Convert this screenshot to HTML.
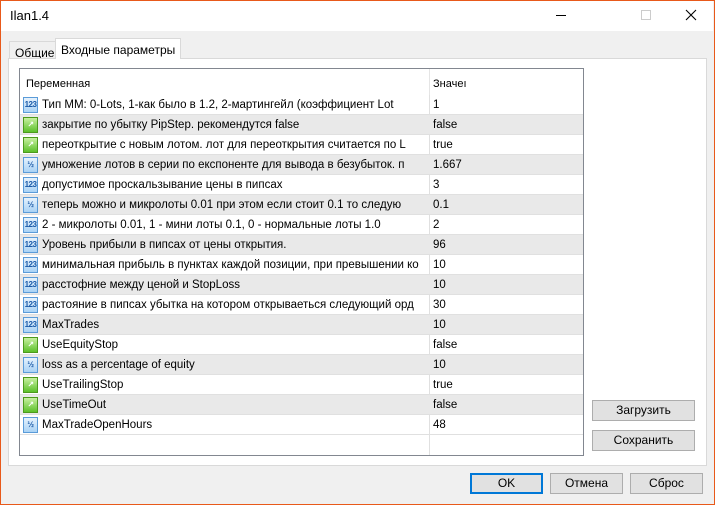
<!DOCTYPE html>
<html><head><meta charset="utf-8"><style>
*{margin:0;padding:0;box-sizing:border-box}
body{width:715px;height:505px;position:relative;background:#f0f0f0;font-family:"Liberation Sans","DejaVu Sans",sans-serif;font-size:12px;color:#000;overflow:hidden}
.win{position:absolute;left:0;top:0;width:715px;height:505px;border:1px solid #e8591a;border-top-color:#e8591a}
.title{position:absolute;left:1px;top:1px;width:712px;height:30px;background:#fff}
.title span{position:absolute;left:9px;top:7px;font-size:13px}
.tab{position:absolute;top:39px;height:20px;border:1px solid #d9d9d9;border-bottom:none;background:#f0f0f0;padding:4px 5px 0;font-size:12px}
.panel{position:absolute;left:8px;top:58px;width:699px;height:408px;background:#fff;border:1px solid #d9d9d9}
.list{position:absolute;left:19px;top:68px;width:565px;height:388px;border:1px solid #828790;background:#fff}
.hdr{position:absolute;left:0;top:0;height:26px;width:563px}
.hdr div{position:absolute;top:9px;font-size:11px}
.row{position:absolute;left:0;width:563px;height:20px;border-bottom:1px solid #e0e0e0;font-size:11.5px}
.row.g{background:#e9e9e9}
.row .n{position:absolute;left:22px;top:4px;white-space:nowrap;width:386px;overflow:hidden}
.row .v{position:absolute;left:413px;top:4px}
.sep{position:absolute;left:409px;top:0;width:1px;height:365px;background:#e0e0e0}
.ic{position:absolute;left:3px;top:2px;width:15px;height:16px;border:1px solid #5a9bd8;background:linear-gradient(#e6f2fd,#a9d2f5);font-size:8px;color:#1a5aa8;font-weight:bold;text-align:center;line-height:14px;letter-spacing:-0.5px}
.ic.gr{border-color:#4c9a1c;background:linear-gradient(#c8f0a0,#5cc02a);color:#fff}
.btn{position:absolute;height:21px;border:1px solid #adadad;background:#e1e1e1;text-align:center;line-height:19px;font-size:12px}
.btn.ok{border:2px solid #0078d7;line-height:17px}
</style></head><body>
<div class="win"></div>
<div class="title"><span>Ilan1.4</span>
<div style="position:absolute;left:555px;top:14px;width:10px;height:1px;background:#000"></div>
<div style="position:absolute;left:640px;top:9px;width:10px;height:10px;border:1px solid #ccc"></div>
<svg style="position:absolute;left:684px;top:8px" width="12" height="12"><path d="M1 1L11 11M11 1L1 11" stroke="#000" stroke-width="1.1"/></svg>
</div>
<div class="tab" style="left:9px;top:41px;height:18px">Общие</div>
<div class="panel"></div>
<div class="tab" style="left:55px;top:38px;height:21px;background:#fff;border-color:#d9d9d9;z-index:2">Входные параметры</div>
<div class="list">
<div class="hdr"><div style="left:6px">Переменная</div><div style="left:413px">Значеı</div></div>
<div class="sep" style="top:0;height:26px;background:#e5e5e5"></div>
<div style="position:absolute;left:0;top:26px">
<div class="sep" style="height:360px"></div>
<div class="row" style="top:0"><div class="ic">123</div><div class="n">Тип ММ: 0-Lots, 1-как было в 1.2, 2-мартингейл (коэффициент Lot</div><div class="v">1</div></div>
<div class="row g" style="top:20px"><div class="ic gr">↗</div><div class="n">закрытие по убытку PipStep. рекомендутся false</div><div class="v">false</div></div>
<div class="row" style="top:40px"><div class="ic gr">↗</div><div class="n">переоткрытие с новым лотом. лот для переоткрытия считается по L</div><div class="v">true</div></div>
<div class="row g" style="top:60px"><div class="ic">½</div><div class="n">умножение лотов в серии по експоненте для вывода в безубыток. п</div><div class="v">1.667</div></div>
<div class="row" style="top:80px"><div class="ic">123</div><div class="n">допустимое проскальзывание цены в пипсах</div><div class="v">3</div></div>
<div class="row g" style="top:100px"><div class="ic">½</div><div class="n">теперь можно и микролоты 0.01 при этом если стоит 0.1 то следую</div><div class="v">0.1</div></div>
<div class="row" style="top:120px"><div class="ic">123</div><div class="n">2 - микролоты 0.01, 1 - мини лоты 0.1, 0 - нормальные лоты 1.0</div><div class="v">2</div></div>
<div class="row g" style="top:140px"><div class="ic">123</div><div class="n">Уровень прибыли в пипсах от цены открытия.</div><div class="v">96</div></div>
<div class="row" style="top:160px"><div class="ic">123</div><div class="n">минимальная прибыль в пунктах каждой позиции, при превышении ко</div><div class="v">10</div></div>
<div class="row g" style="top:180px"><div class="ic">123</div><div class="n">расстофние между ценой и StopLoss</div><div class="v">10</div></div>
<div class="row" style="top:200px"><div class="ic">123</div><div class="n">растояние в пипсах убытка на котором открываеться следующий орд</div><div class="v">30</div></div>
<div class="row g" style="top:220px"><div class="ic">123</div><div class="n">MaxTrades</div><div class="v">10</div></div>
<div class="row" style="top:240px"><div class="ic gr">↗</div><div class="n">UseEquityStop</div><div class="v">false</div></div>
<div class="row g" style="top:260px"><div class="ic">½</div><div class="n">loss as a percentage of equity</div><div class="v">10</div></div>
<div class="row" style="top:280px"><div class="ic gr">↗</div><div class="n">UseTrailingStop</div><div class="v">true</div></div>
<div class="row g" style="top:300px"><div class="ic gr">↗</div><div class="n">UseTimeOut</div><div class="v">false</div></div>
<div class="row" style="top:320px"><div class="ic">½</div><div class="n">MaxTradeOpenHours</div><div class="v">48</div></div>
</div>
</div>
<div class="btn" style="left:592px;top:400px;width:103px">Загрузить</div>
<div class="btn" style="left:592px;top:430px;width:103px">Сохранить</div>
<div class="btn ok" style="left:470px;top:473px;width:73px">OK</div>
<div class="btn" style="left:550px;top:473px;width:73px">Отмена</div>
<div class="btn" style="left:630px;top:473px;width:73px">Сброс</div>
</body></html>
